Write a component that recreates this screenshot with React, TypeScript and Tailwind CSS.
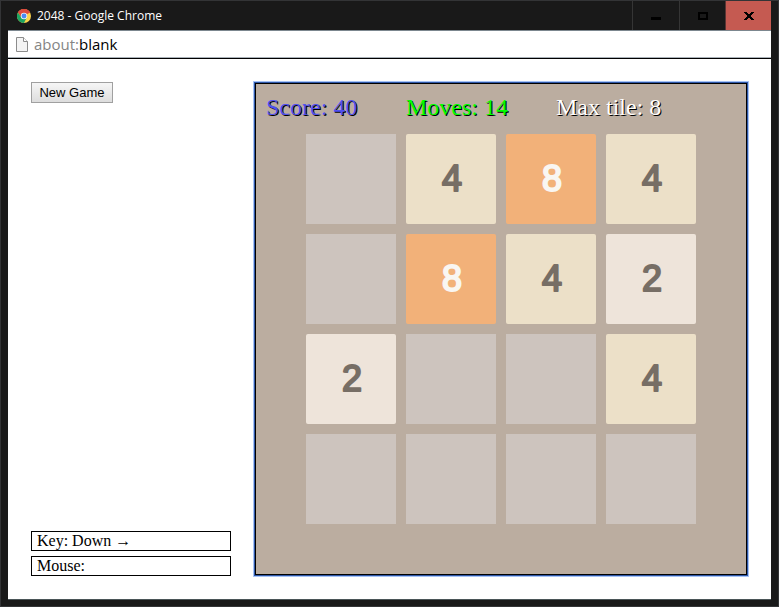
import React from "react";

const SERIF = "font-['Liberation_Serif',serif]";
const UI = "font-['Open_Sans','Noto_Sans',sans-serif]";

const board: number[][] = [
  [0, 4, 8, 4],
  [0, 8, 4, 2],
  [2, 0, 0, 4],
  [0, 0, 0, 0],
];

const tileStyles: Record<number, string> = {
  0: "bg-[#cdc4be]",
  2: "rounded-[2px] bg-[#eee4da] text-[#776e65]",
  4: "rounded-[2px] bg-[#ece0c8] text-[#776e65]",
  8: "rounded-[2px] bg-[#f2b179] text-[#f9f6f2]",
};

function ChromeIcon() {
  return (
    <svg width="14" height="14" viewBox="0 0 48 48" aria-hidden="true">
      <circle cx="24" cy="24" r="24" fill="#fbd34c" />
      <path d="M24 24 L3.2 12 A24 24 0 0 1 44.8 12 Z" fill="#dd4b3e" />
      <path d="M24 13 H45.3 A24 24 0 0 0 3.2 12 L14.5 29.5 Z" fill="#dd4b3e" />
      <path d="M3.2 12 A24 24 0 0 0 24 48 L33.5 29.5 L14.5 29.5 Z" fill="#1da462" />
      <circle cx="24" cy="24" r="11" fill="#f4f4f4" />
      <circle cx="24" cy="24" r="8.5" fill="#4a8af4" />
    </svg>
  );
}

function PageIcon() {
  return (
    <svg width="12" height="16" viewBox="0 0 12 16" fill="none" aria-hidden="true">
      <path d="M0.5 1.5 H7.5 L11.5 5.5 V15.5 H0.5 Z" fill="#f4f4f4" stroke="#8c8c8c" />
      <path d="M7.5 1.5 V5.5 H11.5" fill="#fff" stroke="#8c8c8c" />
    </svg>
  );
}

function TitleBar() {
  return (
    <header className="flex h-[29px] items-stretch justify-between">
      <div className="flex items-center gap-[6px] pl-[9px]">
        <ChromeIcon />
        <h1 className={`${UI} text-[12px] leading-4 text-white`}>2048 - Google Chrome</h1>
      </div>
      <div className="flex">
        <button type="button" aria-label="Minimize" className="flex w-[47px] items-center justify-center border-l border-[#353535]">
          <svg width="10" height="10" viewBox="0 0 10 10" aria-hidden="true">
            <rect y="6" width="10" height="3" fill="#000" />
          </svg>
        </button>
        <button type="button" aria-label="Maximize" className="flex w-[46px] items-center justify-center border-l border-[#353535]">
          <svg width="10" height="8" viewBox="0 0 10 8" aria-hidden="true">
            <rect x="1" y="1" width="8" height="6" fill="none" stroke="#000" strokeWidth="2" />
          </svg>
        </button>
        <button type="button" aria-label="Close" className="flex w-[46px] items-center justify-center border-l border-[#5a3533] bg-[#c55a51]">
          <svg width="10" height="8" viewBox="0 0 10 8" shapeRendering="crispEdges" aria-hidden="true">
            <path d="M0 0H3V1H4V2H6V1H7V0H10V1H9V2H8V3H7V5H8V6H9V7H10V8H7V7H6V6H4V7H3V8H0V7H1V6H2V5H3V3H2V2H1V1H0Z" fill="#000" />
          </svg>
        </button>
      </div>
    </header>
  );
}

function Status({ label, value }: { label: string; value?: React.ReactNode }) {
  return (
    <p className="h-5 border border-black px-[5px] text-[16px] leading-[18px]">
      {label}: {value}
    </p>
  );
}

function Tile({ value }: { value: number }) {
  return (
    <div className={`h-[90px] ${tileStyles[value]}`}>
      {value > 0 && (
        <svg viewBox="0 0 90 90" className="block h-full w-full">
          <text
            x="46"
            y="57"
            textAnchor="middle"
            fill="currentColor"
            stroke="currentColor"
            strokeWidth="2"
            strokeLinejoin="round"
            className="font-['Liberation_Sans',sans-serif] text-[36px]"
          >
            {value}
          </text>
        </svg>
      )}
    </div>
  );
}

export default function App() {
  return (
    <div className="flex min-h-screen flex-col border border-[#333436] bg-[#191919] px-[7px] pb-[6px]">
      <TitleBar />
      <div className="flex h-[28px] items-center gap-[6px] border-t border-b border-t-[#7c878f] border-b-[#a9b1b8] bg-white px-[8px]">
        <PageIcon />
        <div className={`${UI} text-[15px] leading-5 text-black`}>
          <span className="text-[#858585]">about:</span>blank
        </div>
      </div>
      <main className={`${SERIF} flex flex-1 gap-[23px] border-t border-b border-t-black border-b-[#4a5557] bg-white p-[23px] text-black`}>
        <div className="flex flex-1 flex-col justify-between">
          <button
            type="button"
            className="h-[21px] w-[82px] border border-[#a0a0a0] bg-linear-to-b from-[#f6f6f6] to-[#dddddd] text-center font-['Liberation_Sans',sans-serif] text-[13px] leading-[19px]"
          >
            New Game
          </button>
          <div className="flex flex-col gap-[5px]">
            <Status label="Key" value="Down →" />
            <Status label="Mouse" />
          </div>
        </div>
        <section className="h-[494px] w-[494px] border border-[#2d55a5] bg-[#bbada0] p-px shadow-[inset_0_0_0_1px_#000,0_0_0_1px_#a5c3f7]">
          <div className="mb-1 grid h-[46px] grid-cols-[140px_150px_1fr] items-center pl-[10px] text-[24px] leading-7">
            <span className="text-[#5050f0] [text-shadow:1px_1px_0_#000]">Score: 40</span>
            <span className="text-[#00ff00] [text-shadow:1px_1px_0_#000]">Moves: 14</span>
            <span className="text-white [text-shadow:1px_1px_0_#000]">Max tile: 8</span>
          </div>
          <div className="grid grid-cols-[repeat(4,90px)] justify-center gap-[10px]">
            {board.flat().map((n, i) => (
              <Tile key={i} value={n} />
            ))}
          </div>
        </section>
      </main>
    </div>
  );
}
